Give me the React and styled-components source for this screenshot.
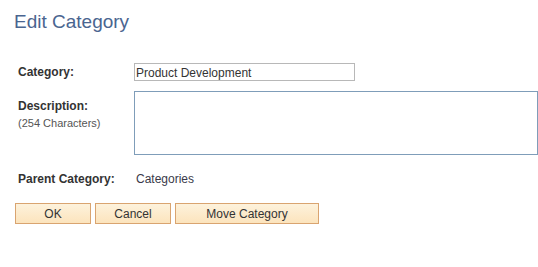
import React from 'react';
import styled, { createGlobalStyle } from 'styled-components';

const GlobalStyle = createGlobalStyle`
  body {
    margin: 0;
    background: #fff;
    font-family: Arial, "Liberation Sans", sans-serif;
  }
`;

const Page = styled.div`
  padding: 11px 0 0 0;
`;

const Title = styled.h1`
  margin: 0 0 0 14px;
  font-size: 19px;
  line-height: 22px;
  font-weight: normal;
  color: #4a6590;
`;

const Form = styled.div`
  display: grid;
  grid-template-columns: 116px 1fr;
  row-gap: 10px;
  margin: 30px 0 0 18px;
`;

const Label = styled.div`
  font-size: 12px;
  line-height: 17px;
  font-weight: bold;
  color: #333;
  padding-top: ${p => p.$offset || 1}px;
`;

const Hint = styled.div`
  font-size: 11px;
  line-height: 16px;
  font-weight: normal;
  color: #555;
`;

const TextInput = styled.input`
  box-sizing: border-box;
  display: block;
  width: 221px;
  height: 18px;
  margin: 0;
  padding: 1px 1px 0;
  border: 1px solid #b8b8b8;
  font-family: Arial, "Liberation Sans", sans-serif;
  font-size: 12px;
  color: #333;
  outline: none;
`;

const TextArea = styled.textarea`
  box-sizing: border-box;
  display: block;
  width: 404px;
  height: 64px;
  margin: 0;
  padding: 2px;
  border: 1px solid #7f9db9;
  resize: none;
  font-family: Arial, "Liberation Sans", sans-serif;
  font-size: 12px;
  outline: none;
`;

const Value = styled.div`
  font-size: 12px;
  line-height: 17px;
  color: #3a3a4a;
  padding: 1px 0 0 2px;
`;

const ParentRow = styled.div`
  display: contents;

  & > * {
    margin-top: 5px;
  }
`;

const ButtonBar = styled.div`
  display: flex;
  gap: 4px;
  margin: 15px 0 0 15px;
`;

const Button = styled.button`
  box-sizing: border-box;
  width: ${p => p.$width}px;
  height: 21px;
  margin: 0;
  padding: 0;
  border: 1px solid #d9a470;
  background: linear-gradient(#fdf2dc, #fce4bd);
  font-family: Arial, "Liberation Sans", sans-serif;
  font-size: 12px;
  color: #333;
  cursor: pointer;
`;

const App = () => {
  return (
    <Page>
      <GlobalStyle />
      <Title>Edit Category</Title>
      <Form>
        <Label>Category:</Label>
        <div>
          <TextInput defaultValue="Product Development" />
        </div>
        <Label $offset={7}>
          Description:
          <Hint>(254 Characters)</Hint>
        </Label>
        <div>
          <TextArea />
        </div>
        <ParentRow>
          <Label>Parent Category:</Label>
          <Value>Categories</Value>
        </ParentRow>
      </Form>
      <ButtonBar>
        <Button $width={76}>OK</Button>
        <Button $width={76}>Cancel</Button>
        <Button $width={144}>Move Category</Button>
      </ButtonBar>
    </Page>
  );
};

export default App;
